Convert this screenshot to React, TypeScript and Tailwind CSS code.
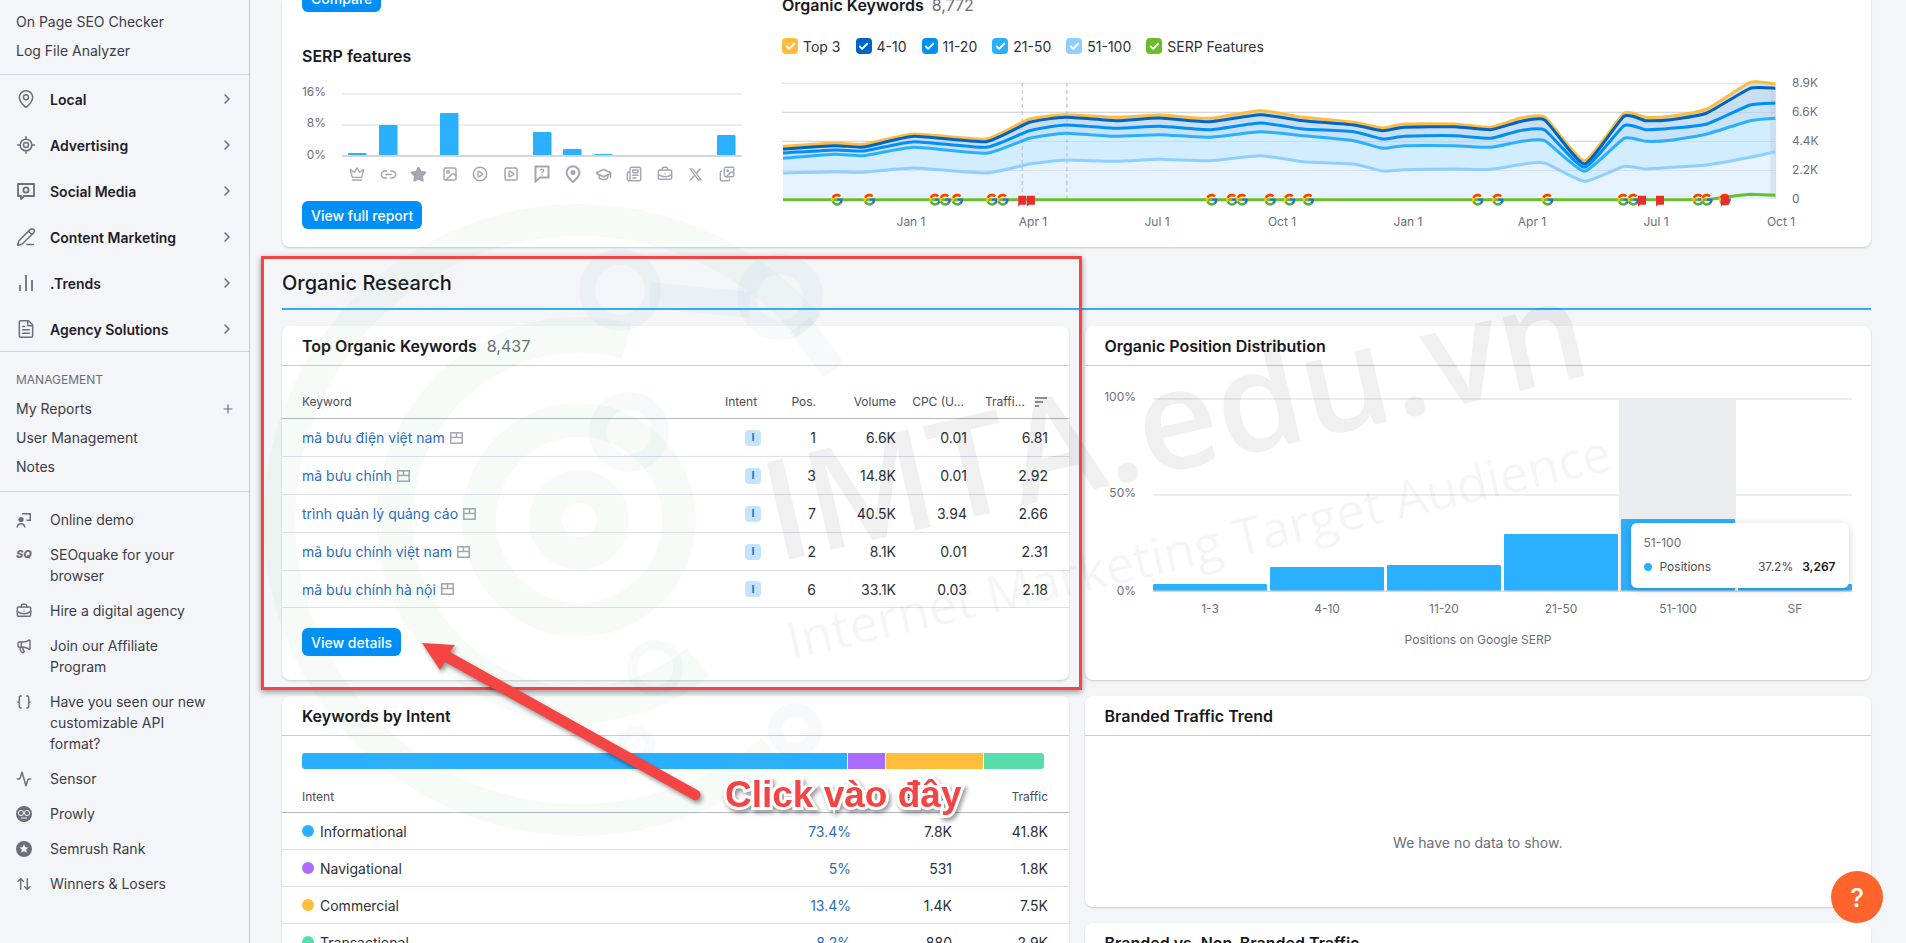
import type { ReactNode } from "react";
import {
  Activity,
  ArrowUpDown,
  Braces,
  BriefcaseBusiness,
  Check,
  ChevronRight,
  CirclePlay,
  Crown,
  FileText,
  GraduationCap,
  Image,
  Images,
  Link2,
  LocateFixed,
  MapPin,
  Megaphone,
  Newspaper,
  PencilLine,
  Plus,
  SquarePlay,
  Star,
} from "lucide-react";
import { FcGoogle } from "react-icons/fc";
import { FaXTwitter } from "react-icons/fa6";

const SocialIcon = () => (
  <svg width="20" height="20" viewBox="0 0 20 20" fill="none" stroke="currentColor" strokeWidth="1.8">
    <path d="M2 3h16v12H8l-3 3v-3H2z" strokeLinejoin="round" />
    <circle cx="10" cy="9" r="2.6" />
  </svg>
);

const TrendsIcon = () => (
  <svg width="20" height="20" viewBox="0 0 20 20" stroke="currentColor" strokeWidth="1.8">
    <path d="M4 18v-6M10 18V2M16 18V7" />
  </svg>
);

const DemoIcon = () => (
  <svg width="16" height="16" viewBox="0 0 16 16" fill="currentColor">
    <circle cx="5" cy="7.5" r="2.6" />
    <path d="M0.5 15.5c0-3 2-4.4 4.5-4.4s4.500 1.400 4.500 4.400h-1.500c0-1.800-1.300-2.900-3-2.900s-3 1.100-3 2.900z" />
    <path d="M6 1h9v8h-4.500V7.600h3V2.400H6z" />
  </svg>
);

const ProwlyIcon = () => (
  <svg width="16" height="16" viewBox="0 0 16 16">
    <circle cx="8" cy="8" r="8" fill="currentColor" />
    <circle cx="5" cy="7" r="2.600" fill="none" stroke="#f4f5f9" strokeWidth="1" />
    <circle cx="11" cy="7" r="2.600" fill="none" stroke="#f4f5f9" strokeWidth="1" />
    <path d="M5 12h6" stroke="#f4f5f9" strokeWidth="1" />
  </svg>
);

const RankIcon = () => (
  <svg width="16" height="16" viewBox="0 0 16 16">
    <circle cx="8" cy="8" r="8" fill="currentColor" />
    <path d="M8 3.200l1.400 3 3.200.3-2.400 2.100.7 3.200L8 10.200l-2.900 1.600.7-3.200-2.400-2.100 3.200-.3z" fill="#f4f5f9" />
  </svg>
);

const mainMenu = [
  { label: "Local", icon: <MapPin size={20} strokeWidth={1.8} /> },
  { label: "Advertising", icon: <LocateFixed size={20} strokeWidth={1.8} /> },
  { label: "Social Media", icon: <SocialIcon /> },
  { label: "Content Marketing", icon: <PencilLine size={20} strokeWidth={1.8} /> },
  { label: ".Trends", icon: <TrendsIcon /> },
  { label: "Agency Solutions", icon: <FileText size={20} strokeWidth={1.8} /> },
];

const extraMenu: { label: ReactNode; icon: ReactNode }[] = [
  { label: "Online demo", icon: <DemoIcon /> },
  {
    label: (
      <>
        SEOquake for your
        <br />
        browser
      </>
    ),
    icon: <span className="text-[11px] font-extrabold italic leading-none">SQ</span>,
  },
  { label: "Hire a digital agency", icon: <BriefcaseBusiness size={16} strokeWidth={2.2} /> },
  {
    label: (
      <>
        Join our Affiliate
        <br />
        Program
      </>
    ),
    icon: <Megaphone size={16} strokeWidth={2.2} />,
  },
  {
    label: (
      <>
        Have you seen our new
        <br />
        customizable API
        <br />
        format?
      </>
    ),
    icon: <Braces size={16} strokeWidth={2.2} />,
  },
  { label: "Sensor", icon: <Activity size={16} strokeWidth={2.2} /> },
  { label: "Prowly", icon: <ProwlyIcon /> },
  { label: "Semrush Rank", icon: <RankIcon /> },
  { label: "Winners & Losers", icon: <ArrowUpDown size={16} strokeWidth={2.2} /> },
];

const Sidebar = () => (
  <aside className="w-[250px] shrink-0 border-r border-[#c4c6ce] text-[14px] text-[#3b3d47]">
    <div className="flex h-[75px] flex-col gap-[8px] border-b border-[#d5d6dd] pl-4 pt-[11px]">
      <div className="leading-[21px]">On Page SEO Checker</div>
      <div className="leading-[21px]">Log File Analyzer</div>
    </div>
    <div className="h-[277px] border-b border-[#d5d6dd] pt-[1px]">
      {mainMenu.map((item) => (
        <div key={item.label} className="flex h-[46px] items-center pl-4 pr-[14px] font-semibold text-[#1f2028]">
          <span className="flex w-[34px] text-[#6c6e79]">{item.icon}</span>
          <span className="grow">{item.label}</span>
          <ChevronRight size={16} className="text-[#6c6e79]" strokeWidth={2.2} />
        </div>
      ))}
    </div>
    <div className="h-[140px] border-b border-[#d5d6dd] pl-4 pr-[14px] pt-[19px]">
      <div className="text-[12px] leading-[18px] text-[#6c6e79]">MANAGEMENT</div>
      <div className="mt-[9px] flex items-center justify-between leading-[21px]">
        My Reports <Plus size={14} className="text-[#6c6e79]" />
      </div>
      <div className="mt-[8px] leading-[21px]">User Management</div>
      <div className="mt-[8px] leading-[21px]">Notes</div>
    </div>
    <div className="flex flex-col gap-[14px] pl-4 pt-[17px]">
      {extraMenu.map((item, i) => (
        <div key={i} className="flex leading-[21px]">
          <span className="flex h-[21px] w-[34px] shrink-0 items-center text-[#6c6e79]">{item.icon}</span>
          <span>{item.label}</span>
        </div>
      ))}
    </div>
  </aside>
);

const Button = ({ children, className }: { children: ReactNode; className?: string }) => (
  <div
    className={`flex h-[28px] w-fit items-center rounded-md bg-[#008ff8] px-[9px] text-[14px] font-medium text-white ${className ?? ""}`}
  >
    {children}
  </div>
);

const serpBars = [
  { x: 348, top: 153 },
  { x: 379, top: 125 },
  { x: 440, top: 113 },
  { x: 533, top: 132 },
  { x: 563, top: 149 },
  { x: 594, top: 154 },
  { x: 717, top: 135 },
];

const QuestionIcon = () => (
  <svg width="16" height="18" viewBox="0 0 16 18" fill="none" stroke="currentColor" strokeWidth="2">
    <path d="M1.500 1.500h13v11H6l-4.500 4z" />
    <path d="M6.500 5.200c.6-1.400 3.400-1.200 3.300.4 0 1.200-1.700 1.200-1.700 2.300M8.100 9.200v1.200" strokeWidth="1.300" />
  </svg>
);

const PinIcon = () => (
  <svg width="16" height="18" viewBox="0 0 16 18" fill="none" stroke="currentColor" strokeWidth="2">
    <path d="M8 17c-3-3-6.500-5.500-6.500-9.200a6.500 6.500 0 0 1 13 0C14.500 11.500 11 14 8 17z" />
    <circle cx="8" cy="7.500" r="1.500" fill="currentColor" />
  </svg>
);

const serpIcons = [
  <Crown key="a" size={16} strokeWidth={2} />,
  <Link2 key="b" size={17} strokeWidth={2.2} />,
  <Star key="c" size={17} fill="currentColor" />,
  <Image key="d" size={16} strokeWidth={2.2} />,
  <CirclePlay key="e" size={16} strokeWidth={2.2} />,
  <SquarePlay key="f" size={16} strokeWidth={2.2} />,
  <QuestionIcon key="g" />,
  <PinIcon key="h" />,
  <GraduationCap key="i" size={17} strokeWidth={2.2} />,
  <Newspaper key="j" size={16} strokeWidth={2.2} />,
  <BriefcaseBusiness key="k" size={16} strokeWidth={2.2} />,
  <FaXTwitter key="l" size={15} />,
  <Images key="m" size={16} strokeWidth={2.2} />,
];

const SerpFeatures = () => (
  <div className="w-[441px] shrink-0">
    <Button className="-mt-[16px]">Compare</Button>
    <div className="mt-[34px] text-[16px] font-semibold leading-5 text-[#181920]">SERP features</div>
    <svg width="441" height="80" className="mt-[18px] block text-[12px]">
      {[
        { y: 10, c: "#ececf1", l: "16%" },
        { y: 41, c: "#ececf1", l: "8%" },
      ].map((g) => (
        <g key={g.y}>
          <rect x="40" y={g.y - 1} width="400" height="2" fill={g.c} />
          <text x="24" y={g.y + 2} textAnchor="end" fill="#6c6e79">
            {g.l}
          </text>
        </g>
      ))}
      <text x="24" y="75" textAnchor="end" fill="#6c6e79">
        0%
      </text>
      {serpBars.map((b) => (
        <rect key={b.x} x={b.x - 302} y={b.top - 84} width="18.500" height={156 - b.top} rx="1" fill="#2bb0ff" />
      ))}
      <rect x="40" y="71" width="400" height="2" fill="#d5d6dd" />
    </svg>
    <div className="-mt-[1px] ml-[40px] grid h-[22px] w-[400px] grid-cols-[repeat(13,1fr)] text-[#a4a6b3]">
      {serpIcons.map((icon) => (
        <div key={icon.key} className="flex items-center justify-center">
          {icon}
        </div>
      ))}
    </div>
    <Button className="mt-[16px]">View full report</Button>
  </div>
);

const legend = [
  { label: "Top 3", color: "bg-[#fdbc3d]" },
  { label: "4-10", color: "bg-[#0064c2]" },
  { label: "11-20", color: "bg-[#008ff8]" },
  { label: "21-50", color: "bg-[#2bb0ff]" },
  { label: "51-100", color: "bg-[#8fcfff]" },
  { label: "SERP Features", color: "bg-[#6bbd2c]" },
];

const xs = [18, 90, 130, 200, 300, 360, 410, 480, 540, 610, 680, 740, 810, 850, 880, 950, 1000, 1040, 1075, 1130, 1185, 1215, 1250, 1300, 1360, 1395];
const series = [
  { stroke: "#fdbc3d", fill: "#cfe0f3", ys: [442, 432, 436, 405, 420, 360, 347, 355, 348, 358, 335, 355, 370, 387, 375, 375, 385, 358, 354, 485, 343, 355, 352, 330, 250, 255] },
  { stroke: "#0064c2", fill: "#c9def3", ys: [450, 440, 444, 412, 428, 370, 355, 365, 357, 368, 347, 365, 378, 395, 385, 383, 392, 368, 363, 495, 352, 365, 362, 342, 268, 268] },
  { stroke: "#008ff8", fill: "#c8e3f8", ys: [462, 453, 456, 428, 445, 395, 378, 388, 382, 392, 372, 390, 398, 420, 412, 410, 418, 395, 393, 505, 380, 392, 388, 375, 318, 312] },
  { stroke: "#2bb0ff", fill: "#d2edff", ys: [478, 466, 470, 445, 463, 418, 403, 412, 407, 415, 398, 410, 425, 448, 440, 440, 445, 428, 425, 517, 418, 427, 424, 405, 365, 358] },
  { stroke: "#8fcfff", fill: "#e6f3fe", ys: [522, 518, 520, 507, 522, 495, 483, 487, 481, 485, 470, 488, 495, 516, 512, 510, 511, 497, 492, 547, 502, 510, 505, 498, 475, 458] },
];

// chart was read off a 1.3876x / 3x crop, so convert to local px here
const px = (zx: number) => zx / 1.3876 - 12;
const py = (zy: number) => zy / 3 - 70;

// soft catmull-rom through the points, low tension so the dip stays sharp
const curve = (ys: number[]) => {
  const p = xs.map((x, i) => [px(x), py(ys[i])]);
  let d = `${p[0][0].toFixed(1)} ${p[0][1].toFixed(1)}`;
  for (let i = 0; i < p.length - 1; i++) {
    const a = p[Math.max(i - 1, 0)];
    const b = p[i];
    const c = p[i + 1];
    const e = p[Math.min(i + 2, p.length - 1)];
    const c1 = [b[0] + (c[0] - a[0]) / 12, b[1] + (c[1] - a[1]) / 12];
    const c2 = [c[0] - (e[0] - b[0]) / 12, c[1] - (e[1] - b[1]) / 12];
    d += ` C${c1[0].toFixed(1)} ${c1[1].toFixed(1)} ${c2[0].toFixed(1)} ${c2[1].toFixed(1)} ${c[0].toFixed(1)} ${c[1].toFixed(1)}`;
  }
  return d;
};

const googleMarks = [93, 138, 229, 243, 260, 308, 323, 613, 641, 655, 694, 721, 747, 982, 1010, 1079, 1184, 1198, 1288, 1300, 1325];
const flags = [350, 362, 1210, 1235, 1325];
const yTicks = [
  { y: 84, l: "8.9K" },
  { y: 113, l: "6.6K" },
  { y: 142, l: "4.4K" },
  { y: 171, l: "2.2K" },
  { y: 200, l: "0" },
];
const xTicks = [
  { x: 911, l: "Jan 1" },
  { x: 1033, l: "Apr 1" },
  { x: 1157, l: "Jul 1" },
  { x: 1282, l: "Oct 1" },
  { x: 1408, l: "Jan 1" },
  { x: 1532, l: "Apr 1" },
  { x: 1656, l: "Jul 1" },
  { x: 1781, l: "Oct 1" },
];

const KeywordsChart = () => (
  <svg width="1067" height="170" className="mt-[13px] block text-[12px]">
    {yTicks.slice(0, 4).map((t) => (
      <rect key={t.y} x="0" y={t.y - 70.5} width="993" height="1.500" fill="#e6e7ed" />
    ))}
    {series.map((s) => (
      <path key={s.stroke} d={`M${px(18)} ${py(600)} L${curve(s.ys)} L${px(1395)} ${py(600)}Z`} fill={s.fill} />
    ))}
    <rect x={px(1388)} y="14" width="6" height="116" fill="#b8c4cc" opacity="0.3" />
    {yTicks.slice(1, 4).map((t) => (
      <rect key={t.y} x="0" y={t.y - 70} width="993" height="1" fill="#8a90a8" opacity="0.18" />
    ))}
    {[350, 412].map((x) => (
      <line key={x} x1={px(x)} x2={px(x)} y1="14" y2="130" stroke="#b9bac2" strokeDasharray="4 3" />
    ))}
    {series.map((s) => (
      <path key={s.stroke} d={`M${curve(s.ys)}`} fill="none" stroke={s.stroke} strokeWidth="3" strokeLinejoin="round" />
    ))}
    <polyline
      points={`${px(18)},${py(602)} ${px(1300)},${py(602)} ${px(1340)},${py(590)} ${px(1360)},${py(586)} ${px(1395)},${py(589)}`}
      fill="none"
      stroke="#6bbd2c"
      strokeWidth="3"
    />
    {googleMarks.map((x) => (
      <FcGoogle key={x} x={px(x) - 7} y={py(602) - 7} size={14} />
    ))}
    {flags.map((x) => (
      <path key={x} d={`M${px(x) - 4} ${py(590)}h8v9h-6l-2 2z`} fill="#ed2b2b" />
    ))}
    {yTicks.map((t) => (
      <text key={t.y} x="1010" y={t.y - 66} fill="#6c6e79">
        {t.l}
      </text>
    ))}
    {xTicks.map((t) => (
      <text key={t.x} x={t.x - 782} y="157" textAnchor="middle" fill="#6c6e79">
        {t.l}
      </text>
    ))}
  </svg>
);

const TopCard = () => (
  <section className="flex h-[247px] shrink-0 gap-[39px] rounded-b-lg bg-white pl-5 shadow-[0_1px_2px_rgba(0,0,0,0.18)]">
    <SerpFeatures />
    <div className="grow">
      <div className="-mt-[5px] flex h-5 items-center gap-2">
        <span className="text-[16px] font-semibold text-[#181920]">Organic Keywords</span>
        <span className="text-[16px] text-[#6c6e79]">8,772</span>
      </div>
      <div className="mt-[21px] flex h-5 items-center gap-[15px] text-[14px] text-[#2e3038]">
        {legend.map((item) => (
          <div key={item.label} className="flex items-center gap-[5px]">
            <span className={`flex h-4 w-4 items-center justify-center rounded ${item.color}`}>
              <Check size={11} strokeWidth={4} className="text-white" />
            </span>
            {item.label}
          </div>
        ))}
      </div>
      <KeywordsChart />
    </div>
  </section>
);

const Card = ({
  title,
  count,
  children,
  className,
}: {
  title: string;
  count?: string;
  children: ReactNode;
  className?: string;
}) => (
  <div className={`relative rounded-lg bg-white shadow-[0_1px_2px_rgba(0,0,0,0.18)] ${className ?? ""}`}>
    <div className="flex h-[40px] items-center gap-[10px] border-b-[1.5px] border-[#c9cad2] px-5">
      <span className="text-[16px] font-semibold text-[#181920]">{title}</span>
      {count && <span className="text-[16px] text-[#6c6e79]">{count}</span>}
    </div>
    {children}
  </div>
);

const keywords = [
  { kw: "mã bưu điện việt nam", pos: 1, vol: "6.6K", cpc: "0.01", tr: "6.81" },
  { kw: "mã bưu chính", pos: 3, vol: "14.8K", cpc: "0.01", tr: "2.92" },
  { kw: "trình quản lý quảng cáo", pos: 7, vol: "40.5K", cpc: "3.94", tr: "2.66" },
  { kw: "mã bưu chính việt nam", pos: 2, vol: "8.1K", cpc: "0.01", tr: "2.31" },
  { kw: "mã bưu chính hà nội", pos: 6, vol: "33.1K", cpc: "0.03", tr: "2.18" },
];

const SerpMark = () => (
  <svg width="13" height="12" viewBox="0 0 13 12" fill="none" stroke="#a4a6b3" strokeWidth="1.500" className="ml-[5px] shrink-0">
    <rect x="0.800" y="0.800" width="11.400" height="10.400" />
    <path d="M0.800 5.500h11.400M6.500 0.800v4.700" />
  </svg>
);

const tableCols = "grid grid-cols-[423px_39px_52px_80px_71px_81px] items-center pl-5";

const TopKeywords = () => (
  <Card title="Top Organic Keywords" count="8,437" className="h-[354px]">
    <div className={`${tableCols} h-[53px] border-b-[1.5px] border-[#b4b6c0] pt-[20px] text-[12px] text-[#4a4c57]`}>
      <div>Keyword</div>
      <div>Intent</div>
      <div className="text-right">Pos.</div>
      <div className="text-right">Volume</div>
      <div className="pr-[3px] text-right">CPC (U...</div>
      <div className="flex items-center justify-end gap-[10px]">
        Traffi...
        <svg width="13" height="10" viewBox="0 0 13 10" stroke="#6c6e79" strokeWidth="1.500">
          <path d="M0 1h12M0 5h8M0 9h4" />
        </svg>
      </div>
    </div>
    {keywords.map((k, i) => (
      <div
        key={k.kw}
        className={`${tableCols} ${i === 4 ? "h-[37px]" : "h-[38px]"} border-b border-[#dfe0e7] text-[14px] text-[#2e3038]`}
      >
        <div className="flex items-center text-[#2b6cbf]">
          {k.kw}
          <SerpMark />
        </div>
        <div className="pl-[20px]">
          <span className="flex h-4 w-4 items-center justify-center rounded bg-[#c2e4ff] text-[11px] font-semibold text-[#006dca]">
            I
          </span>
        </div>
        <div className="text-right">{k.pos}</div>
        <div className="text-right">{k.vol}</div>
        <div className="text-right">{k.cpc}</div>
        <div className="text-right">{k.tr}</div>
      </div>
    ))}
    <Button className="ml-5 mt-[20px]">View details</Button>
  </Card>
);

const posBars = [
  { x: 1153, top: 583, l: "1-3" },
  { x: 1270, top: 566, l: "4-10" },
  { x: 1387, top: 564, l: "11-20" },
  { x: 1504, top: 533, l: "21-50" },
  { x: 1621, top: 518, l: "51-100" },
  { x: 1738, top: 583, l: "SF" },
];

const PositionChart = () => (
  <Card title="Organic Position Distribution" className="h-[354px]">
    <svg width="786" height="314" className="block text-[12px]">
      <rect x="534" y="33" width="117" height="192" fill="#ecedf1" />
      {[
        { y: 33, l: "100%" },
        { y: 129, l: "50%" },
      ].map((g) => (
        <g key={g.y}>
          <rect x="68" y={g.y - 1} width="699" height="2" fill="#ecedf1" />
          <text x="51" y={g.y + 2} textAnchor="end" fill="#6c6e79">
            {g.l}
          </text>
        </g>
      ))}
      <text x="51" y="229" textAnchor="end" fill="#6c6e79">
        0%
      </text>
      {posBars.map((b) => (
        <g key={b.l}>
          <rect x={b.x - 1085} y={b.top - 365} width="114" height={590 - b.top} rx="1" fill="#2bb0ff" />
          <text x={b.x - 1085 + 57} y="247" textAnchor="middle" fill="#6c6e79">
            {b.l}
          </text>
        </g>
      ))}
      <rect x="68" y="224.500" width="699" height="1.500" fill="#d5d6dd" />
      <text x="393" y="278" textAnchor="middle" fill="#6c6e79">
        Positions on Google SERP
      </text>
    </svg>
    <div className="absolute left-[546px] top-[197px] h-[65px] w-[218px] rounded-md bg-white px-[13px] pt-[11px] text-[12px] text-[#4a4c57] shadow-[0_2px_8px_rgba(0,0,0,0.2)]">
      <div className="leading-[18px] text-[#6c6e79]">51-100</div>
      <div className="mt-[6px] flex items-center leading-[18px]">
        <span className="mr-2 h-2 w-2 rounded-full bg-[#2bb0ff]" />
        <span className="grow">Positions</span>
        <span className="mr-[9px]">37.2%</span>
        <span className="font-semibold text-[#181920]">3,267</span>
      </div>
    </div>
  </Card>
);

const intents = [
  { name: "Informational", dot: "bg-[#2bb0ff]", pct: "73.4%", kw: "7.8K", tr: "41.8K" },
  { name: "Navigational", dot: "bg-[#ab6cfe]", pct: "5%", kw: "531", tr: "1.8K" },
  { name: "Commercial", dot: "bg-[#ffbe3c]", pct: "13.4%", kw: "1.4K", tr: "7.5K" },
  { name: "Transactional", dot: "bg-[#58deab]", pct: "8.2%", kw: "880", tr: "2.9K" },
];

const intentCols = "grid grid-cols-[424px_125px_101px_96px] items-center pl-5";

const KeywordsByIntent = () => (
  <Card title="Keywords by Intent" className="h-[300px]">
    <div className="mx-5 mt-[17px] flex h-4 w-[742px] gap-[1px] overflow-hidden rounded-[3px]">
      <div className="w-[545px] bg-[#2bb0ff]" />
      <div className="w-[37px] bg-[#ab6cfe]" />
      <div className="w-[97px] bg-[#ffbe3c]" />
      <div className="grow bg-[#58deab]" />
    </div>
    <div className={`${intentCols} mt-[18px] h-[26px] border-b-[1.5px] border-[#b4b6c0] pb-[6px] text-[12px] text-[#4a4c57]`}>
      <div>Intent</div>
      <div />
      <div className="text-right">Keywords</div>
      <div className="text-right">Traffic</div>
    </div>
    {intents.map((r) => (
      <div key={r.name} className={`${intentCols} h-[37px] border-b border-[#dfe0e7] text-[14px] text-[#2e3038]`}>
        <div className="flex items-center gap-[6px]">
          <span className={`h-3 w-3 rounded-full ${r.dot}`} />
          {r.name}
        </div>
        <div className="text-right text-[#2b6cbf]">{r.pct}</div>
        <div className="text-right">{r.kw}</div>
        <div className="text-right">{r.tr}</div>
      </div>
    ))}
  </Card>
);

const Watermark = () => (
  <>
    <svg width="1906" height="943" fill="none" className="pointer-events-none absolute left-0 top-0">
      <g stroke="#64b46e" strokeOpacity="0.05">
        <circle cx="579" cy="520" r="33.500" strokeWidth="33" />
        <circle cx="579" cy="520" r="100" strokeWidth="34" />
        <path d="M627 341A185 185 0 1 0 698 662" strokeWidth="36" />
        <path d="M809 327A300 300 0 1 0 772 750" strokeWidth="32" />
      </g>
      <g stroke="#3282aa" strokeOpacity="0.045">
        <circle cx="620" cy="290" r="33" strokeWidth="16" />
        <circle cx="780" cy="297" r="33" strokeWidth="20" />
        <path d="M650 295l100 10M800 325l34 45" strokeWidth="26" />
        <circle cx="629" cy="432" r="31" strokeWidth="18" />
        <circle cx="655" cy="668" r="23" strokeWidth="10" />
        <circle cx="636" cy="745" r="14" strokeWidth="10" />
        <circle cx="795" cy="730" r="20" strokeWidth="14" />
      </g>
    </svg>
    <div className="pointer-events-none absolute left-[764px] top-[440px] origin-left -rotate-[13deg] whitespace-nowrap font-['Open_Sans',sans-serif] text-[140px] font-semibold leading-none text-black/[0.06]">
      IMTA.edu.vn
    </div>
    <div className="pointer-events-none absolute left-[787px] top-[615px] origin-left -rotate-[13deg] whitespace-nowrap font-['Open_Sans',sans-serif] text-[51px] leading-none text-black/[0.04]">
      Internet Marketing Target Audience
    </div>
  </>
);

const Annotation = () => (
  <>
    <div className="pointer-events-none absolute left-[261px] top-[256px] h-[434px] w-[821px] border-[3px] border-[#f44444] shadow-[0_2px_6px_rgba(0,0,0,0.4)]" />
    <svg width="1906" height="943" className="pointer-events-none absolute left-0 top-0 drop-shadow-[2px_3px_2px_rgba(0,0,0,0.4)]">
      <path
        d="M422 643L455 645L450 652L699 791Q703 796 697 800Q694 801 692 799L445 662L440 670Z"
        fill="#f44444"
      />
    </svg>
    <div className="pointer-events-none absolute left-[725px] top-[772px] whitespace-nowrap font-['Liberation_Sans',sans-serif] text-[37px] font-bold leading-[46px] text-[#f44444] drop-shadow-[2px_3px_2px_rgba(0,0,0,0.4)] [-webkit-text-stroke:6px_white] [paint-order:stroke_fill]">
      Click vào đây
    </div>
  </>
);

export default function App() {
  return (
    <div className="relative flex h-[943px] w-[1906px] overflow-hidden bg-[#f4f5f9] font-['Inter',sans-serif]">
      <Sidebar />
      <main className="flex min-w-0 grow flex-col pl-[32px] pr-[35px]">
        <TopCard />
        <h2 className="mt-[24px] h-[37px] shrink-0 text-[20px] font-medium leading-6 text-[#181920]">Organic Research</h2>
        <div className="h-[2px] shrink-0 bg-[#2bb0ff]" />
        <div className="mt-4 grid shrink-0 grid-cols-2 gap-4">
          <TopKeywords />
          <PositionChart />
          <KeywordsByIntent />
          <div className="flex flex-col gap-4">
            <Card title="Branded Traffic Trend" className="h-[211px]">
              <div className="flex h-[171px] items-center justify-center pt-[42px] text-[14px] text-[#6c6e79]">
                We have no data to show.
              </div>
            </Card>
            <Card title="Branded vs. Non-Branded Traffic" className="h-[300px]">
              <div />
            </Card>
          </div>
        </div>
      </main>
      <Watermark />
      <Annotation />
      <div className="absolute bottom-[20px] right-[23px] flex h-[52px] w-[52px] items-center justify-center rounded-full bg-[#ff642d] text-[26px] font-medium text-white">
        ?
      </div>
    </div>
  );
}
